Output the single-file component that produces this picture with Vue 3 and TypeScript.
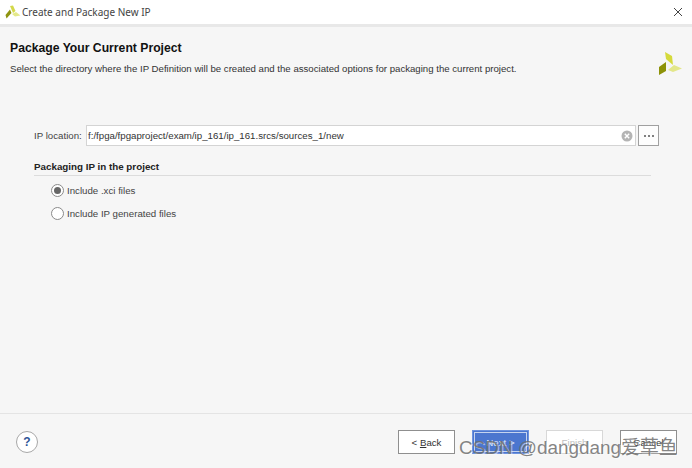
<script setup lang="ts">
const options = [
  { label: 'Include .xci files', checked: true },
  { label: 'Include IP generated files', checked: false },
]
</script>

<template>
  <div class="dialog">
    <header class="titlebar">
      <svg class="logo-small" viewBox="0 0 16 14" width="16" height="14">
        <polygon points="5,1 8,0.5 10.5,6 8,8" fill="#d3d84a" />
        <polygon points="0.5,10 5,4.5 6.5,8 1.5,13.5" fill="#8f9410" />
        <polygon points="7,9 11,7 15.5,10.5 10,11.5" fill="#e4e88a" />
      </svg>
      <span class="title">Create and Package New IP</span>
      <svg class="close" viewBox="0 0 10 10" width="10" height="10">
        <path d="M1 1 L9 9 M9 1 L1 9" stroke="#444" stroke-width="1" fill="none" />
      </svg>
    </header>

    <section class="intro">
      <div class="intro-text">
        <h1>Package Your Current Project</h1>
        <p>Select the directory where the IP Definition will be created and the associated options for packaging the current project.</p>
      </div>
      <svg class="logo" viewBox="0 0 24 26" width="24" height="26">
        <polygon points="6,0 13,4 14,13 7,7" fill="#d5da3c" />
        <polygon points="0,15 7,10 7,19 0,23" fill="#8d9208" />
        <polygon points="9,18 15,13 23,16.5 14,20" fill="#e3e78a" />
      </svg>
    </section>

    <main class="content">
      <div class="location">
        <label>IP location:</label>
        <div class="input">
          <span class="value">f:/fpga/fpgaproject/exam/ip_161/ip_161.srcs/sources_1/new</span>
          <svg class="clear" viewBox="0 0 12 12" width="12" height="12">
            <circle cx="6" cy="6" r="5.5" fill="#b4b4b4" />
            <path d="M3.8 3.8 L8.2 8.2 M8.2 3.8 L3.8 8.2" stroke="#fff" stroke-width="1.4" />
          </svg>
        </div>
        <button class="browse" type="button">
          <i></i><i></i><i></i>
        </button>
      </div>

      <div class="group">
        <h2>Packaging IP in the project</h2>
        <div v-for="o in options" :key="o.label" class="radio-row">
          <span class="radio" :class="{ checked: o.checked }"></span>
          <span>{{ o.label }}</span>
        </div>
      </div>
    </main>

    <footer class="footer">
      <span class="help">?</span>
      <div class="buttons">
        <button class="btn" type="button"><span>&lt; <u>B</u>ack</span></button>
        <button class="btn primary" type="button"><span>Next &gt;</span></button>
        <button class="btn disabled" type="button"><span>Finish</span></button>
        <button class="btn" type="button"><span>Cancel</span></button>
      </div>
    </footer>

    <div class="watermark">CSDN @dangdang爱草鱼</div>
  </div>
</template>

<style>
html, body { margin: 0; padding: 0; }
</style>

<style scoped>
.dialog {
  position: relative;
  width: 692px;
  height: 468px;
  background: #f6f6f6;
  font-family: "Liberation Sans", Arial, sans-serif;
  font-size: 9.7px;
  color: #2a2a2a;
  display: flex;
  flex-direction: column;
  overflow: hidden;
}
.titlebar {
  height: 27px;
  box-sizing: border-box;
  flex: none;
  background: #fff;
  border-bottom: 3px solid #e8e8e8;
  display: flex;
  align-items: center;
  padding: 0 9px 0 5px;
}
.logo-small { flex: none; }
.title {
  margin-left: 1px;
  font-family: "Noto Sans", sans-serif;
  font-size: 10px;
  color: #444;
}
.close { margin-left: auto; }
.intro {
  display: flex;
  justify-content: space-between;
  padding: 14px 9px 0 10px;
  height: 71px;
  flex: none;
  box-sizing: border-box;
}
.intro h1 {
  margin: 0;
  font-size: 12.2px;
  line-height: 14px;
  font-weight: 700;
  color: #111;
}
.intro p {
  margin: 8px 0 0;
  font-size: 9.65px;
  line-height: 12px;
  color: #333;
}
.logo { margin-top: 11px; }
.content {
  flex: 1;
  padding: 27px 33px 0 34px;
}
.location {
  display: flex;
  align-items: center;
  height: 21px;
}
.location label { width: 52px; flex: none; color: #444; }
.input {
  width: 550px;
  flex: none;
  height: 21px;
  box-sizing: border-box;
  background: #fff;
  border: 1px solid #d4d4d4;
  display: flex;
  align-items: center;
  justify-content: space-between;
  padding: 0 2px 0 1px;
  color: #333;
}
.browse {
  margin-left: 2px;
  width: 21px;
  height: 21px;
  flex: none;
  padding: 0;
  background: #fdfdfd;
  border: 1px solid #a0a0a0;
  display: flex;
  align-items: center;
  justify-content: center;
  gap: 2px;
}
.browse i {
  width: 2px;
  height: 2px;
  background: #555;
  border-radius: 50%;
}
.group { margin-top: 14px; width: 617px; }
.group h2 {
  margin: 0;
  font-size: 9.8px;
  line-height: 13px;
  font-weight: 700;
  color: #222;
  padding-bottom: 2px;
  border-bottom: 1px solid #dcdcdc;
  margin-bottom: 7px;
}
.radio-row {
  display: flex;
  align-items: center;
  gap: 3px;
  margin-left: 17px;
  height: 15px;
  margin-bottom: 8px;
  color: #444;
}
.radio {
  width: 13px;
  height: 13px;
  box-sizing: border-box;
  border: 1px solid #8a8a8a;
  border-radius: 50%;
  background: #fff;
  display: flex;
  align-items: center;
  justify-content: center;
}
.radio.checked::after {
  content: "";
  width: 7px;
  height: 7px;
  border-radius: 50%;
  background: #666;
}
.footer {
  height: 55px;
  flex: none;
  box-sizing: border-box;
  border-top: 1px solid #e4e4e4;
  display: flex;
  align-items: flex-start;
  justify-content: space-between;
  padding: 16px 15px 0 16px;
}
.help {
  margin-top: 1px;
  width: 22px;
  height: 22px;
  box-sizing: border-box;
  border: 1px solid #a8a8a8;
  border-radius: 50%;
  background: #fff;
  display: flex;
  align-items: center;
  justify-content: center;
  font-weight: 700;
  font-size: 12px;
  color: #2f5597;
}
.buttons { display: flex; gap: 17px; align-items: center; }
.btn {
  width: 57px;
  height: 24px;
  box-sizing: border-box;
  padding: 0;
  background: #fff;
  border: 1px solid #8f8f8f;
  font: inherit;
  color: #333;
  display: flex;
  align-items: center;
  justify-content: center;
}
.btn.primary {
  background: #4b76cf;
  border: 1px solid #6d93df;
  color: #dfe7f7;
  padding: 1px;
}
.btn.primary span {
  flex: 1;
  align-self: stretch;
  display: flex;
  align-items: center;
  justify-content: center;
  border: 1px solid #c5d3ef;
}
.btn.disabled {
  border-color: #d8d8d8;
  color: #c0c0c0;
}
.watermark {
  position: absolute;
  left: 459px;
  top: 437px;
  font-family: "Liberation Sans", "Noto Sans CJK SC", sans-serif;
  font-size: 18.9px;
  line-height: 22px;
  color: rgba(110, 110, 110, 0.85);
  text-shadow: 1px 1px 0 rgba(255, 255, 255, 0.5);
  white-space: nowrap;
  pointer-events: none;
}
</style>
